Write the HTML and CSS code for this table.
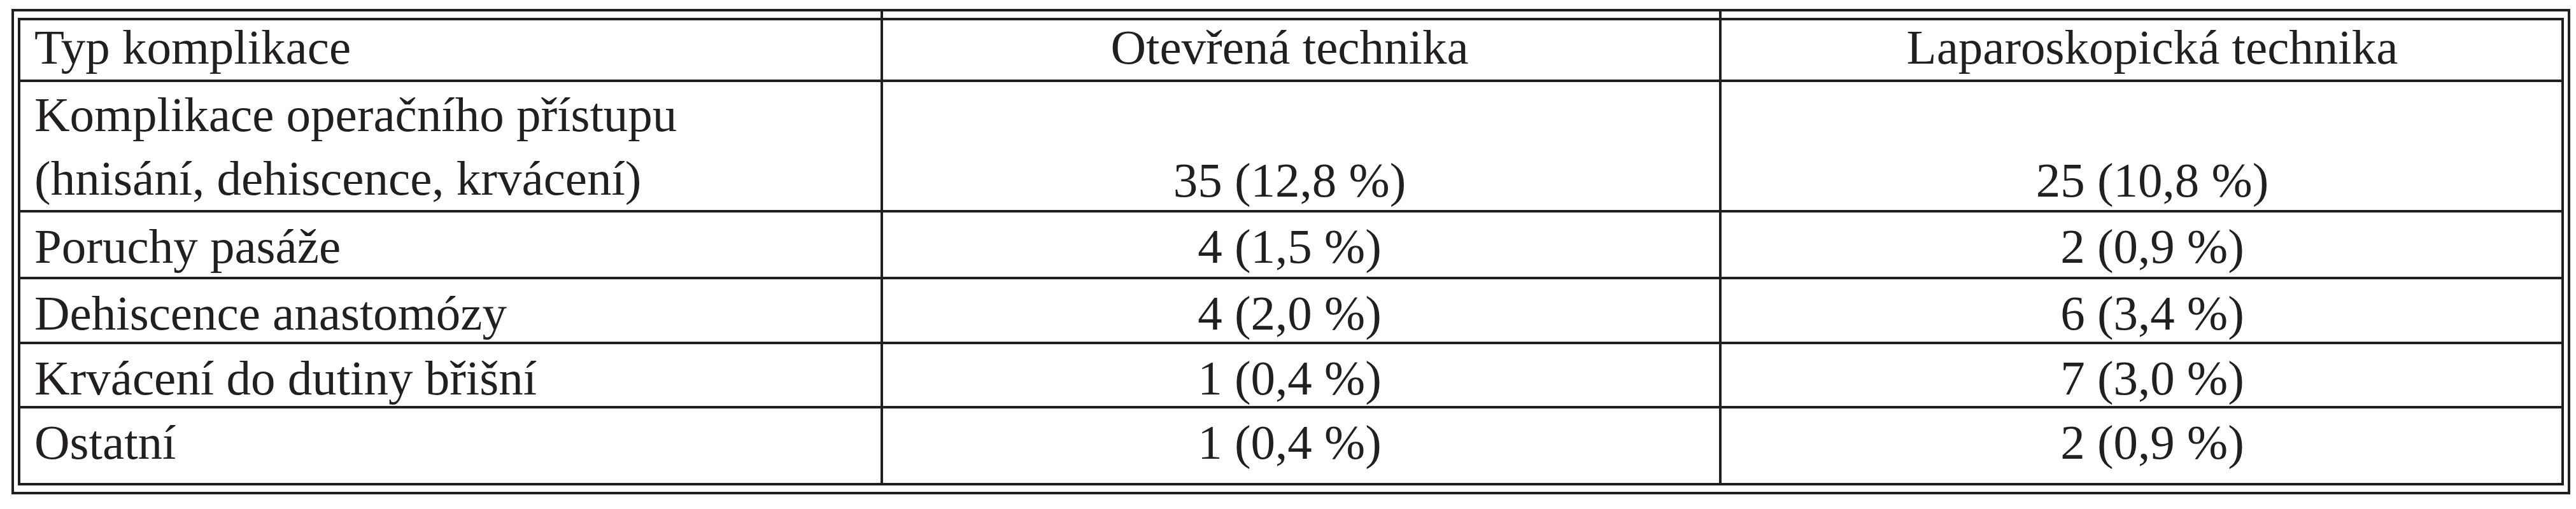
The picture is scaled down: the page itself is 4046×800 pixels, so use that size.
FILE: index.html
```html
<!DOCTYPE html>
<html lang="cs">
<head>
<meta charset="utf-8">
<title>Komplikace</title>
<link rel="stylesheet" href="styles.css">
</head>
<body>
<div class="frame">
  <table class="comp">
    <thead>
      <tr class="r-head">
        <th class="c1">Typ komplikace</th>
        <th class="c2">Otevřená technika</th>
        <th class="c3">Laparoskopická technika</th>
      </tr>
    </thead>
    <tbody>
      <tr class="r1">
        <td class="c1">Komplikace operačního přístupu<br>(hnisání, dehiscence, krvácení)</td>
        <td class="c2 val">35 (12,8 %)</td>
        <td class="c3 val">25 (10,8 %)</td>
      </tr>
      <tr class="r2">
        <td class="c1">Poruchy pasáže</td>
        <td class="c2">4 (1,5 %)</td>
        <td class="c3">2 (0,9 %)</td>
      </tr>
      <tr class="r3">
        <td class="c1">Dehiscence anastomózy</td>
        <td class="c2">4 (2,0 %)</td>
        <td class="c3">6 (3,4 %)</td>
      </tr>
      <tr class="r4">
        <td class="c1">Krvácení do dutiny břišní</td>
        <td class="c2">1 (0,4 %)</td>
        <td class="c3">7 (3,0 %)</td>
      </tr>
      <tr class="r5">
        <td class="c1">Ostatní</td>
        <td class="c2">1 (0,4 %)</td>
        <td class="c3">2 (0,9 %)</td>
      </tr>
    </tbody>
  </table>
</div>
</body>
</html>
```
FILE: styles.css
```css
html, body {
  margin: 0;
  background: #ffffff;
}
body {
  padding: 14px 0 0 18px;
  font-family: "Liberation Serif", "Times New Roman", serif;
  color: #231f20;
}
.frame {
  width: 4019px;
  box-sizing: border-box;
  border: 4px solid #231f20;
  padding: 10px 6px;
}
.comp {
  width: 3999px;
  box-sizing: border-box;
  border: 4px solid #231f20;
  border-collapse: separate;
  border-spacing: 0;
  table-layout: fixed;
  font-size: 77px;
  color: #231f20;
}
.comp th,
.comp td {
  box-sizing: border-box;
  padding: 0;
  border-top: 4px solid #231f20;
  border-left: 4px solid #231f20;
  font-weight: normal;
  white-space: nowrap;
  vertical-align: top;
}
.comp th {
  position: relative;
  border-top: 0;
  line-height: 85px;
}
.comp td {
  line-height: 86px;
  padding-top: 10px;
}
.comp .c1 {
  width: 1351px;
  border-left: 0;
  text-align: left;
  padding-left: 22px;
}
.comp .c2 {
  width: 1317px;
  text-align: center;
  padding-right: 36px;
}
.comp .c3 {
  width: 1323px;
  text-align: center;
  padding-left: 34px;
}
.comp th.c2::before,
.comp th.c3::before {
  content: "";
  position: absolute;
  left: -4px;
  top: -14px;
  width: 4px;
  height: 14px;
  background: #231f20;
}
.r-head { height: 93px; }
.r1 { height: 205px; }
.r2 { height: 105px; }
.r3 { height: 102px; }
.r4 { height: 101px; }
.r5 { height: 121px; }
.r1 td.c1 {
  line-height: 100px;
  padding-top: 1px;
}
.r1 td.val {
  vertical-align: bottom;
  padding-top: 0;
  padding-bottom: 4px;
}
```
